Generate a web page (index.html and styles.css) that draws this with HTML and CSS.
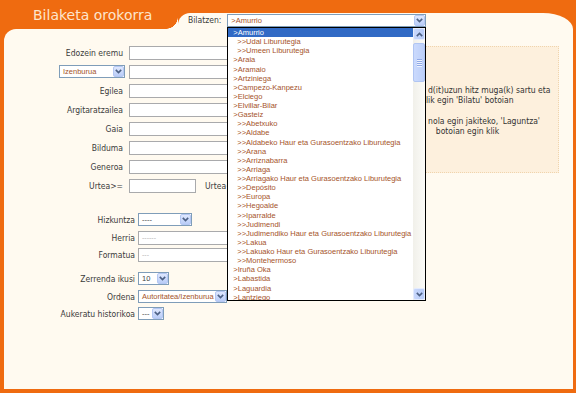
FILE: index.html
```html
<!DOCTYPE html>
<html lang="eu">
<head>
  <meta charset="utf-8">
  <title>Bilaketa orokorra</title>
  <link rel="stylesheet" href="styles.css">
</head>

<body>
<div class="frame">
  <div class="head">
    <h1 class="title">Bilaketa orokorra</h1>

    <div class="tab">
      <span class="tab-label">Bilatzen:</span>
      <div class="sel sel-lib">
        <span class="val brown">&gt;Amurrio</span>
        <span class="btn"><svg width="7" height="5" viewBox="0 0 7 5"><path d="M0.8 0.9 L3.5 3.6 L6.2 0.9" fill="none" stroke="#4d6185" stroke-width="1.6"/></svg></span>

        <div class="list">
          <ul class="items">
            <li class="on">&gt;Amurrio</li>
            <li class="sub">&gt;&gt;Udal Liburutegia</li>
            <li class="sub">&gt;&gt;Umeen Liburutegia</li>
            <li>&gt;Araia</li>
            <li>&gt;Aramaio</li>
            <li>&gt;Artziniega</li>
            <li>&gt;Campezo-Kanpezu</li>
            <li>&gt;Elciego</li>
            <li>&gt;Elvillar-Bilar</li>
            <li>&gt;Gasteiz</li>
            <li class="sub">&gt;&gt;Abetxuko</li>
            <li class="sub">&gt;&gt;Aldabe</li>
            <li class="sub">&gt;&gt;Aldabeko Haur eta Gurasoentzako Liburutegia</li>
            <li class="sub">&gt;&gt;Arana</li>
            <li class="sub">&gt;&gt;Arriznabarra</li>
            <li class="sub">&gt;&gt;Arriaga</li>
            <li class="sub">&gt;&gt;Arriagako Haur eta Gurasoentzako Liburutegia</li>
            <li class="sub">&gt;&gt;Depósito</li>
            <li class="sub">&gt;&gt;Europa</li>
            <li class="sub">&gt;&gt;Hegoalde</li>
            <li class="sub">&gt;&gt;Iparralde</li>
            <li class="sub">&gt;&gt;Judimendi</li>
            <li class="sub">&gt;&gt;Judimendiko Haur eta Gurasoentzako Liburutegia</li>
            <li class="sub">&gt;&gt;Lakua</li>
            <li class="sub">&gt;&gt;Lakuako Haur eta Gurasoentzako Liburutegia</li>
            <li class="sub">&gt;&gt;Montehermoso</li>
            <li>&gt;Iruña Oka</li>
            <li>&gt;Labastida</li>
            <li>&gt;Laguardia</li>
            <li>&gt;Lantziego</li>
          </ul>
          <div class="sbar">
            <span class="sbtn"><svg width="7" height="5" viewBox="0 0 7 5"><path d="M0.8 4.1 L3.5 1.4 L6.2 4.1" fill="none" stroke="#4d6185" stroke-width="1.6"/></svg></span>
            <span class="track"><span class="thumb"><i></i><i></i><i></i><i></i></span></span>
            <span class="sbtn"><svg width="7" height="5" viewBox="0 0 7 5"><path d="M0.8 0.9 L3.5 3.6 L6.2 0.9" fill="none" stroke="#4d6185" stroke-width="1.6"/></svg></span>
          </div>
        </div>
      </div>
    </div>
  </div>

  <div class="panel">
    <div class="form">
      <div class="grid g1">
        <label>Edozein eremu</label><span class="inp"></span>

        <div class="sel sel-field">
          <span class="val brown">Izenburua</span>
          <span class="btn"><svg width="7" height="5" viewBox="0 0 7 5"><path d="M0.8 0.9 L3.5 3.6 L6.2 0.9" fill="none" stroke="#4d6185" stroke-width="1.6"/></svg></span>
        </div>
        <span class="inp"></span>

        <label>Egilea</label><span class="inp"></span>
        <label>Argitaratzailea</label><span class="inp"></span>
        <label>Gaia</label><span class="inp"></span>
        <label>Bilduma</label><span class="inp"></span>
        <label>Generoa</label><span class="inp"></span>

        <label>Urtea&gt;=</label>
        <span class="years">
          <span class="inp short"></span>
          <label>Urtea&lt;=</label>
          <span class="inp short"></span>
        </span>
      </div>

      <div class="grid g2">
        <label>Hizkuntza</label>
        <div class="sel sel-lang">
          <span class="val">----</span>
          <span class="btn"><svg width="7" height="5" viewBox="0 0 7 5"><path d="M0.8 0.9 L3.5 3.6 L6.2 0.9" fill="none" stroke="#4d6185" stroke-width="1.6"/></svg></span>
        </div>

        <label>Herria</label><span class="inp hint">------</span>
        <label>Formatua</label><span class="inp hint">---</span>

        <span class="spacer"></span>

        <label>Zerrenda ikusi</label>
        <div class="sel sel-num">
          <span class="val">10</span>
          <span class="btn"><svg width="7" height="5" viewBox="0 0 7 5"><path d="M0.8 0.9 L3.5 3.6 L6.2 0.9" fill="none" stroke="#4d6185" stroke-width="1.6"/></svg></span>
        </div>

        <label>Ordena</label>
        <div class="sel sel-order">
          <span class="val brown">Autoritatea/Izenburua</span>
          <span class="btn"><svg width="7" height="5" viewBox="0 0 7 5"><path d="M0.8 0.9 L3.5 3.6 L6.2 0.9" fill="none" stroke="#4d6185" stroke-width="1.6"/></svg></span>
        </div>

        <label>Aukeratu historikoa</label>
        <div class="sel sel-hist">
          <span class="val">---</span>
          <span class="btn"><svg width="7" height="5" viewBox="0 0 7 5"><path d="M0.8 0.9 L3.5 3.6 L6.2 0.9" fill="none" stroke="#4d6185" stroke-width="1.6"/></svg></span>
        </div>
      </div>
    </div>

    <div class="info">
      <p>Bilatu nahi d(it)uzun hitz muga(k) sartu eta<br>klik egin 'Bilatu' botoian</p>
      <p>Bilaketa nola egin jakiteko, 'Laguntza'<br>botoian egin klik</p>
    </div>
  </div>
</div>
</body>
</html>
```

FILE: styles.css
```css
* {box-sizing: border-box;}

body {margin: 0; background: #ef6b10; font-family: "DejaVu Sans Condensed", "DejaVu Sans", sans-serif; font-size: 8.5px; color: #3b3b3b;}

.frame {height: 393px; padding: 0 3px 4px 4px; display: flex; flex-direction: column;}

/* header band with title and the tab */
.head {flex: 0 0 29px; display: flex;}
.title {width: 174px; margin: 0; padding: 7px 0 0 29px; font: normal 14px/16px "DejaVu Sans", sans-serif; color: #fde5cc;}
.tab {flex: 1; margin-top: 13px; background: #fffaf0; border-radius: 12px 30px 0 0 / 12px 16px 0 0; position: relative; display: flex; align-items: flex-start; padding: 1px 0 0 10px;}
.tab::before {content: ""; position: absolute; left: -12px; bottom: 0; width: 12px; height: 12px; background: radial-gradient(circle at 0 0, transparent 11.5px, #fffaf0 12px);}
.tab-label {line-height: 13px; margin-right: 6px;}

/* selects */
.sel {display: flex; align-items: center; height: 13px; border: 1px solid #7f9db9; background: #fff;}
.sel .val {flex: 1; padding-left: 3px; line-height: 11px; white-space: nowrap; overflow: hidden; font-family: "Liberation Sans", sans-serif; font-size: 7.5px; color: #444;}
.sel .btn {flex: none; width: 11px; height: 11px; background: linear-gradient(#dfe8fe, #b9ccf7); border: 1px solid #b4c7f3; border-radius: 2px; display: flex; align-items: center; justify-content: center;}
.sel .brown, .items {color: #a5532a;}

.sel-lib {width: 199px; position: relative;}
.sel-field {width: 66px; justify-self: end;}
.sel-lang {width: 54px;}
.sel-num {width: 31px;}
.sel-order {width: 89px;}
.sel-hist {width: 26px;}

/* open list */
.list {position: absolute; z-index: 10; left: -1px; top: calc(100% + 1px); width: 199px; height: 274px; border: 1px solid #000; background: #fff; display: flex;}
.items {flex: 1; margin: 0; padding: 0; list-style: none; overflow: hidden; font-family: "Liberation Sans", sans-serif; font-size: 7.5px; line-height: 9.12px;}
.items li {padding-left: 5px; white-space: nowrap;}
.items li.sub {padding-left: 9px;}
.items li.on {background: #316ac5; color: #fff;}

.sbar {flex: none; width: 12px; display: flex; flex-direction: column; background: linear-gradient(90deg, #f1f0ea, #fbfbf8);}
.sbtn {flex: none; height: 12px; background: linear-gradient(90deg, #c9d8fc, #b7cbf7); border: 1px solid #e4ebfd; border-radius: 2px; display: flex; align-items: center; justify-content: center;}
.track {flex: 1; padding-top: 3px;}
.thumb {height: 39px; background: linear-gradient(90deg, #cbdafd, #bccff9); border: 1px solid #b0c5f3; border-radius: 2px; display: flex; flex-direction: column; align-items: center; justify-content: center; gap: 1px;}
.thumb i {width: 5px; height: 1px; background: #90a9e6; box-shadow: 0 1px 0 #eef3fe;}

/* panel and form */
.panel {flex: 1; background: #fffaf0; border-radius: 12px 0 0 0; display: flex; padding-top: 17px;}
.form {flex: 0 0 360px;}
.grid {display: grid; align-items: start;}
.grid label {line-height: 14px; text-align: right; white-space: nowrap;}

.g1 {grid-template-columns: 121px 211px; column-gap: 4px; row-gap: 5px; grid-auto-rows: 14px;}
.g1 > label {padding-right: 2px;}
.g2 {margin-top: 20px; grid-template-columns: 131px 200px; column-gap: 3px; row-gap: 3.5px; grid-template-rows: 14px 14px 14px 3px 14px 14px 14px;}
.spacer {grid-column: 1 / -1;}

.inp {display: block; height: 14px; border: 1px solid #a9aaac; background: #fff; padding-left: 3px; line-height: 12px;}
.inp.short {width: 67px;}
.hint {color: #b5b5b5; font-family: "Liberation Sans", sans-serif; font-size: 7px;}
.years {display: flex; gap: 9px;}

/* help box */
.info {flex: 0 0 189px; height: 127px; margin-left: 6px; background: #fdf0dd; border: 1px dotted #f0d4ad; padding: 38px 0 0 6px; text-align: center; line-height: 10px; color: #333;}
.info p {margin: 0 0 11px; white-space: nowrap;}
```
